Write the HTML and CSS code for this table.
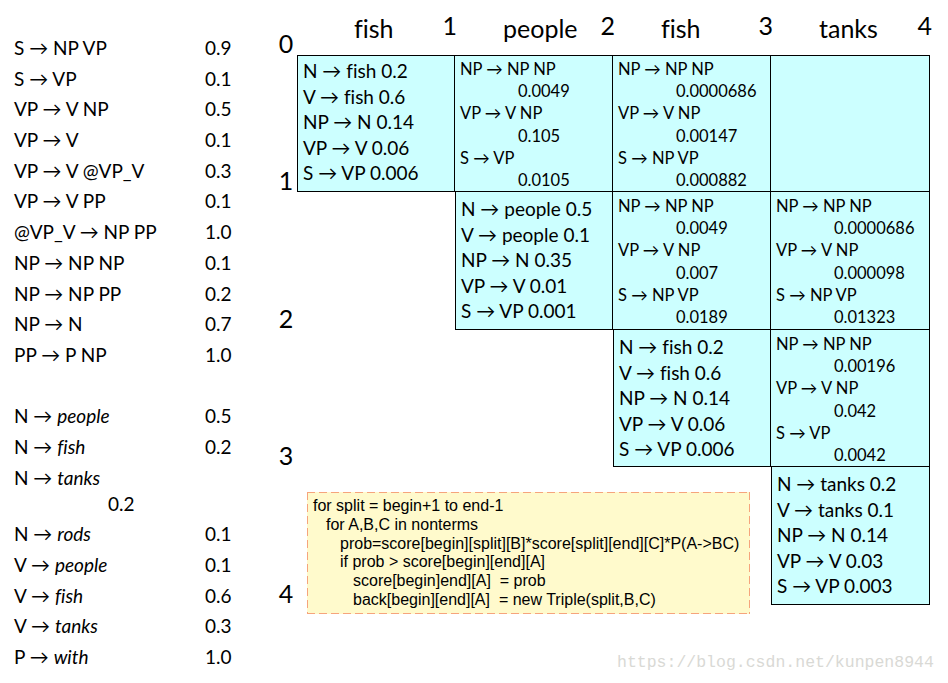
FILE: index.html
```html
<!DOCTYPE html>
<html>
<head>
<meta charset="utf-8">
<link rel="stylesheet" href="styles.css">
</head>
<body>
<div class="page">
  <div class="rules">
    <div class="rule"><span class="lhs">S → NP VP</span><span>0.9</span></div>
    <div class="rule"><span class="lhs">S → VP</span><span>0.1</span></div>
    <div class="rule"><span class="lhs">VP → V NP</span><span>0.5</span></div>
    <div class="rule"><span class="lhs">VP → V</span><span>0.1</span></div>
    <div class="rule"><span class="lhs">VP → V @VP_V</span><span>0.3</span></div>
    <div class="rule"><span class="lhs">VP → V PP</span><span>0.1</span></div>
    <div class="rule"><span class="lhs">@VP_V → NP PP</span><span>1.0</span></div>
    <div class="rule"><span class="lhs">NP → NP NP</span><span>0.1</span></div>
    <div class="rule"><span class="lhs">NP → NP PP</span><span>0.2</span></div>
    <div class="rule"><span class="lhs">NP → N</span><span>0.7</span></div>
    <div class="rule"><span class="lhs">PP → P NP</span><span>1.0</span></div>
    <div class="rule blank"></div>
    <div class="rule"><span class="lhs">N → <i>people</i></span><span>0.5</span></div>
    <div class="rule"><span class="lhs">N → <i>fish</i></span><span>0.2</span></div>
    <div class="rule wrap"><span class="lhs">N → <i>tanks</i></span><span class="wrapped">0.2</span></div>
    <div class="rule"><span class="lhs">N → <i>rods</i></span><span>0.1</span></div>
    <div class="rule"><span class="lhs">V → <i>people</i></span><span>0.1</span></div>
    <div class="rule"><span class="lhs">V → <i>fish</i></span><span>0.6</span></div>
    <div class="rule"><span class="lhs">V → <i>tanks</i></span><span>0.3</span></div>
    <div class="rule"><span class="lhs">P → <i>with</i></span><span>1.0</span></div>
  </div>

  <div class="chart">
    <div class="lbl row0">0</div>
    <div class="lbl row1">1</div>
    <div class="lbl row2">2</div>
    <div class="lbl row3">3</div>
    <div class="lbl row4">4</div>

    <div class="hd col1 first"><span class="word">fish</span><span class="idx">1</span></div>
    <div class="hd col2"><span class="word">people</span><span class="idx">2</span></div>
    <div class="hd col3"><span class="word">fish</span><span class="idx">3</span></div>
    <div class="hd col4"><span class="word">tanks</span><span class="idx">4</span></div>

    <!-- row 0 -->
    <div class="cell big diag top row1 col1">
      <div>N → fish 0.2</div>
      <div>V → fish 0.6</div>
      <div>NP → N 0.14</div>
      <div>VP → V 0.06</div>
      <div>S → VP 0.006</div>
    </div>
    <div class="cell small top row1 col2">
      <div>NP → NP NP</div><div class="val">0.0049</div>
      <div>VP → V NP</div><div class="val">0.105</div>
      <div>S → VP</div><div class="val">0.0105</div>
    </div>
    <div class="cell small top row1 col3">
      <div>NP → NP NP</div><div class="val">0.0000686</div>
      <div>VP → V NP</div><div class="val">0.00147</div>
      <div>S → NP VP</div><div class="val">0.000882</div>
    </div>
    <div class="cell small top row1 col4"></div>

    <!-- row 1 -->
    <div class="cell big diag row2 col2">
      <div>N → people 0.5</div>
      <div>V → people 0.1</div>
      <div>NP → N 0.35</div>
      <div>VP → V 0.01</div>
      <div>S → VP 0.001</div>
    </div>
    <div class="cell small row2 col3">
      <div>NP → NP NP</div><div class="val">0.0049</div>
      <div>VP → V NP</div><div class="val">0.007</div>
      <div>S → NP VP</div><div class="val">0.0189</div>
    </div>
    <div class="cell small row2 col4">
      <div>NP → NP NP</div><div class="val">0.0000686</div>
      <div>VP → V NP</div><div class="val">0.000098</div>
      <div>S → NP VP</div><div class="val">0.01323</div>
    </div>

    <!-- row 2 -->
    <div class="cell big diag row3 col3">
      <div>N → fish 0.2</div>
      <div>V → fish 0.6</div>
      <div>NP → N 0.14</div>
      <div>VP → V 0.06</div>
      <div>S → VP 0.006</div>
    </div>
    <div class="cell small row3 col4">
      <div>NP → NP NP</div><div class="val">0.00196</div>
      <div>VP → V NP</div><div class="val">0.042</div>
      <div>S → VP</div><div class="val">0.0042</div>
    </div>

    <!-- row 3 -->
    <div class="cell big diag row4 col4">
      <div>N → tanks 0.2</div>
      <div>V → tanks 0.1</div>
      <div>NP → N 0.14</div>
      <div>VP → V 0.03</div>
      <div>S → VP 0.003</div>
    </div>

    <div class="code row4">
<div>for split = begin+1 to end-1</div>
<div class="i1">for A,B,C in nonterms</div>
<div class="i2">prob=score[begin][split][B]*score[split][end][C]*P(A-&gt;BC)</div>
<div class="i2">if prob &gt; score[begin][end][A]</div>
<div class="i3">score[begin]end][A]&nbsp; = prob</div>
<div class="i3">back[begin][end][A]&nbsp; = new Triple(split,B,C)</div>
    </div>
  </div>

  <div class="watermark">https://blog.csdn.net/kunpen8944</div>
</div>
</body>
</html>
```

FILE: styles.css
```css
* { box-sizing: border-box; }

html, body {
  margin: 0;
  padding: 0;
  background: #ffffff;
}

.page {
  position: relative;
  width: 948px;
  height: 683px;
  overflow: hidden;
  display: flex;
  font-family: "Lato", "Liberation Sans", sans-serif;
  font-variant-ligatures: none;
  color: #000;
}

/* ---------- grammar list ---------- */
.rules {
  width: 275px;
  padding: 35px 0 0 14px;
  font-size: 19px;
  display: flex;
  flex-direction: column;
}

.rule {
  display: flex;
  line-height: 26px;
  height: 26px;
  margin-bottom: 4.7px;
  white-space: nowrap;
}

.rule.blank { height: 26px; }

.rule.wrap {
  flex-direction: column;
  height: 52px;
  margin-bottom: 4.7px;
}

.lhs { width: 191px; }

.wrapped { padding-left: 94px; }

/* ---------- chart ---------- */
.chart {
  display: grid;
  grid-template-columns: 22px 158px 158px 158px 159px;
  grid-template-rows: 55px 137px 138px 137px 138px;
}

.row0 { grid-row: 1; }
.row1 { grid-row: 2; }
.row2 { grid-row: 3; }
.row3 { grid-row: 4; }
.row4 { grid-row: 5; }
.col1 { grid-column: 2; }
.col2 { grid-column: 3; }
.col3 { grid-column: 4; }
.col4 { grid-column: 5; }

.lbl {
  grid-column: 1;
  align-self: end;
  text-align: center;
  font-size: 25px;
  line-height: 22px;
  margin-bottom: 1px;
}

.hd {
  grid-row: 1;
  display: flex;
  justify-content: space-between;
  align-items: flex-start;
  padding: 11px 0 0 48px;
  font-size: 25px;
  line-height: 28px;
}

.hd.first { padding-left: 57px; }

.hd .word { margin-top: 3px; }

.hd .idx { margin-right: -2px; }

.cell {
  background: #ccffff;
  border-right: 1px solid #000;
  border-bottom: 1px solid #000;
  white-space: nowrap;
}

.cell.top { border-top: 1px solid #000; }
.cell.diag { border-left: 1px solid #000; }

.cell.big {
  font-size: 19px;
  line-height: 25.6px;
  padding: 2px 0 0 5px;
}

.cell.big:not(.top) { padding-top: 4px; }

.cell.small {
  font-size: 16.5px;
  line-height: 22.2px;
  padding: 2px 0 0 5px;
}

.cell.small:not(.top) { padding-top: 3px; }

.cell .val { padding-left: 58px; }

/* ---------- pseudo code box ---------- */
.code {
  grid-column: 2 / 5;
  align-self: start;
  justify-self: start;
  margin: 25px 0 0 10px;
  width: 443px;
  height: 122px;
  padding: 5px 0 0 6px;
  font-family: "Liberation Sans", Arial, sans-serif;
  font-size: 16px;
  line-height: 18.8px;
  white-space: nowrap;
  background-color: #fffacc;
  background-image:
    repeating-linear-gradient(90deg, #f6a47c 0 8px, transparent 8px 12px),
    repeating-linear-gradient(90deg, #f6a47c 0 8px, transparent 8px 12px),
    repeating-linear-gradient(180deg, #f6a47c 0 8px, transparent 8px 12px),
    repeating-linear-gradient(180deg, #f6a47c 0 8px, transparent 8px 12px);
  background-size: 100% 1px, 100% 1px, 1px 100%, 1px 100%;
  background-position: 0 0, 0 100%, 0 0, 100% 0;
  background-repeat: no-repeat;
}

.code .i1 { padding-left: 13px; }
.code .i2 { padding-left: 27px; }
.code .i3 { padding-left: 40px; }

/* ---------- watermark ---------- */
.watermark {
  position: absolute;
  left: 617px;
  top: 652px;
  font-family: "Liberation Mono", monospace;
  font-size: 16.5px;
  line-height: 22px;
  color: #d9d9d5;
}
```
